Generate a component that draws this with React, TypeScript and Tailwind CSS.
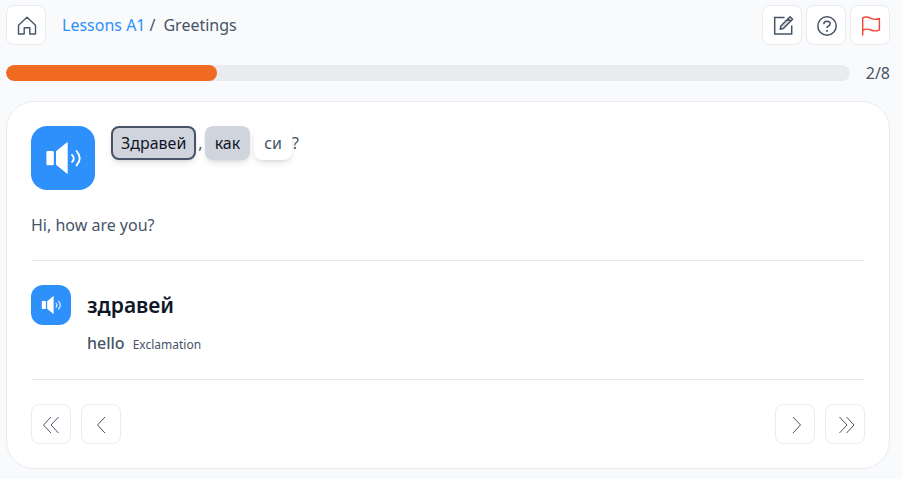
import type { ReactNode } from "react";

function IconButton({ label, children }: { label: string; children: ReactNode }) {
  return (
    <button
      type="button"
      aria-label={label}
      className="flex size-10 shrink-0 items-center justify-center rounded-lg border border-[#e9ebef] bg-white text-[#475467]"
    >
      {children}
    </button>
  );
}

function SpeakerIcon({ className }: { className: string }) {
  return (
    <svg viewBox="0 0 36 36" className={className} fill="none" aria-hidden="true">
      <rect x="1.4" y="11" width="7.4" height="14.2" rx="1.2" fill="#fff" />
      <path d="M11 11.2 21.8 2.4q.9-.6.9.4v30.4q0 1-.9.4L11 24.8Z" fill="#fff" />
      <path d="M27.1 15q3.4 3.4 0 6.8M31.6 11.2q6.2 7.1 0 14.2" stroke="#fff" strokeWidth="1.9" strokeLinecap="round" />
    </svg>
  );
}

function Chevrons({ d }: { d: string }) {
  return (
    <svg viewBox="-2 -2 22 22" className="size-[22px]" fill="none" stroke="currentColor" strokeWidth="1" aria-hidden="true">
      <path d={d} />
    </svg>
  );
}

export default function App() {
  return (
    <div className="min-h-screen bg-[#f9fafc] pt-[5px] pr-3 pb-2.5 pl-1.5 font-['Noto_Sans',sans-serif] text-base text-[#475467]">
      <div className="flex flex-col gap-4">
        <header className="flex items-center justify-between">
          <div className="flex items-center gap-4">
            <IconButton label="Home">
              <svg viewBox="-2 -2 22 22" className="size-[22px]" fill="none" stroke="currentColor" strokeWidth="1.4" aria-hidden="true">
                <path d="M1.5 9.2 10 1.3l8.5 7.9V18h-5.7v-6.2H7.2V18H1.5Z" strokeLinejoin="round" />
              </svg>
            </IconButton>
            <nav aria-label="Breadcrumb" className="flex gap-1">
              <a href="#lessons" className="text-[#2e90fa]">Lessons A1</a>
              <span className="mr-1">/</span>
              <span>Greetings</span>
            </nav>
          </div>
          <div className="flex gap-1">
            <IconButton label="Edit">
              <svg viewBox="-2 -2 22 22" className="size-[22px] overflow-visible" fill="none" stroke="currentColor" strokeWidth="1.5" aria-hidden="true">
                <path d="M11.5 1.5H1.7V18h17V9.5" />
                <path d="m17 .7 2.6 2.6-9.2 9.2-3.2.7.7-3.2ZM14.8 2.9l2.6 2.6" fill="#d5d9df" strokeLinejoin="round" />
              </svg>
            </IconButton>
            <IconButton label="Help">
              <svg viewBox="-2 -2 22 22" className="size-[22px]" fill="none" stroke="currentColor" strokeWidth="1.5" aria-hidden="true">
                <circle cx="10" cy="10" r="9.2" />
                <path d="M6.8 8.2q0-3 3.2-3 3.2.1 3.2 2.6 0 1.4-1.7 2.2Q10 10.6 10 12" />
                <path d="M10 14v1.8" strokeWidth="1.8" />
              </svg>
            </IconButton>
            <IconButton label="Report a problem">
              <svg viewBox="-2 -2 22 22" className="size-[22px] text-[#f04438]" fill="none" stroke="currentColor" strokeWidth="1.4" aria-hidden="true">
                <path d="M1.7 19.5V1.8C4.5.5 7.2 1 10 2.3s5.5 1.5 8.4.2v11.3c-3 1.6-5.6 1.4-8.4.2s-5.5-1.4-8.3.4" strokeLinejoin="round" />
              </svg>
            </IconButton>
          </div>
        </header>

        <div className="flex items-center gap-4">
          <div
            role="progressbar"
            aria-label="Lesson progress"
            aria-valuemin={0}
            aria-valuemax={8}
            aria-valuenow={2}
            className="h-4 flex-1 overflow-hidden rounded-full bg-[#eaebef]"
          >
            <div className="h-full w-1/4 rounded-full bg-[#f06a21]" />
          </div>
          <span>2/8</span>
        </div>

        <main className="rounded-[28px] border border-[#e8eaee] bg-white p-6">
          <section className="flex items-start gap-4">
            <button type="button" aria-label="Play sentence" className="flex size-16 shrink-0 items-center justify-center rounded-2xl bg-[#2e90fa]">
              <SpeakerIcon className="size-9" />
            </button>
            <p className="flex items-center">
              <button type="button" className="rounded-lg border-2 border-[#475467] bg-[#d0d4dd] px-2 py-[3px] text-[#101828] shadow-md">Здравей</button>
              <span className="ml-0.5">,</span>
              <button type="button" className="ml-0.5 rounded-lg bg-[#d0d4dd] px-2.5 py-[5px] text-[#101828] shadow-md">как</button>
              <button type="button" className="ml-1 rounded-lg bg-white px-2.5 py-[5px] shadow-md">си</button>
              <span>?</span>
            </p>
          </section>
          <p className="my-[23px]">Hi, how are you?</p>

          <hr className="border-[#e6e7ea]" />

          <section className="flex gap-4 py-6">
            <button type="button" aria-label="Play word" className="flex size-10 shrink-0 items-center justify-center rounded-xl bg-[#2e90fa]">
              <SpeakerIcon className="size-5" />
            </button>
            <div>
              <h1 className="text-[21px] leading-10 font-semibold text-[#101828]">здравей</h1>
              <p className="mt-1.5">
                <span className="font-medium">hello</span>
                <span className="ml-2 text-xs">Exclamation</span>
              </p>
            </div>
          </section>

          <hr className="border-[#e6e7ea]" />

          <nav aria-label="Exercise navigation" className="mt-6 flex justify-between">
            <div className="flex gap-2.5">
              <IconButton label="First"><Chevrons d="m9 2-7.5 8L9 18M16.5 2 9 10l7.5 8" /></IconButton>
              <IconButton label="Previous"><Chevrons d="m13 2-7.5 8 7.5 8" /></IconButton>
            </div>
            <div className="flex gap-2.5">
              <IconButton label="Next"><Chevrons d="m7 2 7.5 8L7 18" /></IconButton>
              <IconButton label="Last"><Chevrons d="m3.5 2 7.5 8-7.5 8M10.5 2 18 10l-7.5 8" /></IconButton>
            </div>
          </nav>
        </main>
      </div>
    </div>
  );
}
